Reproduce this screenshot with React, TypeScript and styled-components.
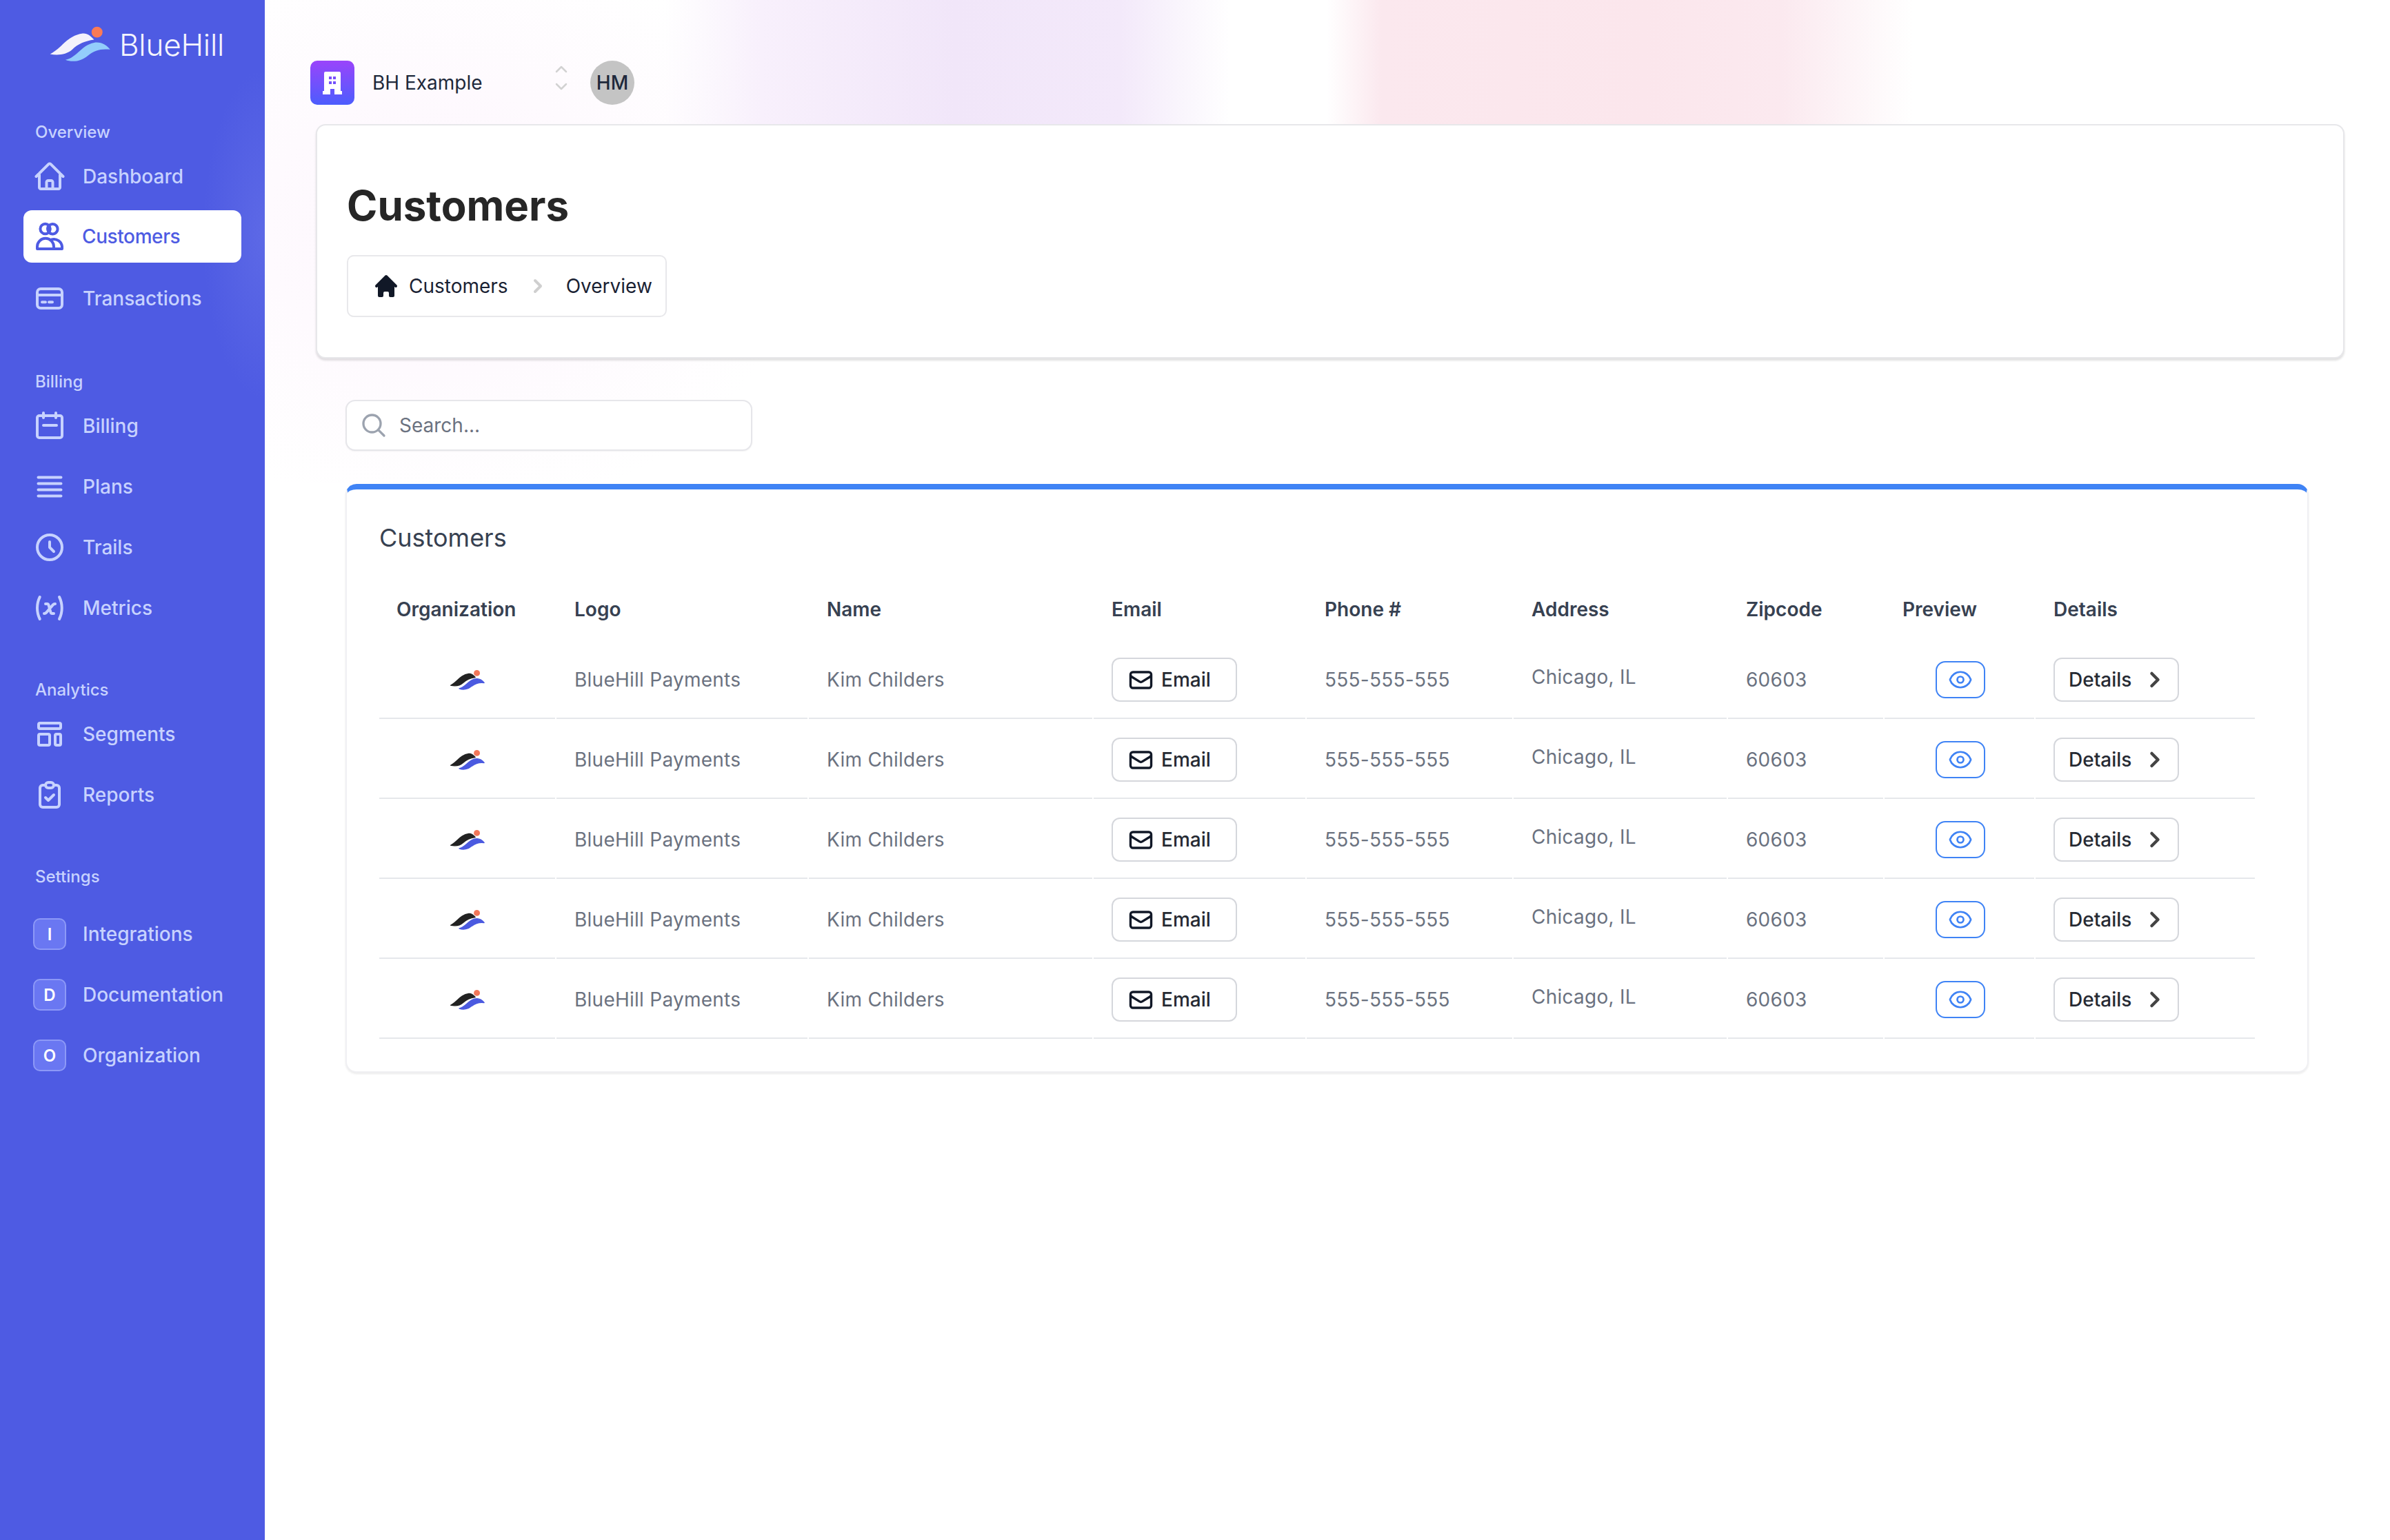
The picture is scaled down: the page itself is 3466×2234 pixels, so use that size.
import React from 'react';
import styled, { createGlobalStyle } from 'styled-components';
import { ChevronRight } from 'lucide-react';
import { HiHome, HiOutlineClipboardCheck, HiOutlineClock, HiOutlineTemplate, HiOutlineVariable } from 'react-icons/hi';
import {
  HiOutlineBars4,
  HiOutlineEnvelope,
  HiOutlineEye,
  HiOutlineHome,
  HiOutlineMagnifyingGlass,
} from 'react-icons/hi2';

const GlobalStyle = createGlobalStyle`
  * { box-sizing: border-box; }
  html, body { margin: 0; padding: 0; background: #fff; }
  body { font-family: Inter, "Liberation Sans", sans-serif; }
`;

const Shell = styled.div`
  display: flex;
  width: 3466px;
  min-height: 2234px;
`;

/* sidebar */
const Sidebar = styled.aside`
  flex: 0 0 384px;
  padding-top: 36px;
  background-color: #4e5be3;
  background-image: radial-gradient(ellipse 90px 240px at 100% 340px, #5d69e6, transparent);
`;

const Brand = styled.div`
  display: flex;
  align-items: center;
  gap: 10px;
  margin: 0 0 87px 70px;
`;

const BrandName = styled.span`
  padding-top: 2px;
  font-size: 44px;
  font-weight: 300;
  line-height: 55px;
  letter-spacing: -0.2px;
  color: #f4f4fd;
`;

const NavSection = styled.section<{ $first?: boolean }>`
  margin-bottom: ${(p) => (p.$first ? 71 : 69)}px;
`;

const SectionLabel = styled.div<{ $gap?: number }>`
  margin: 0 0 ${(p) => p.$gap ?? 14}px 51px;
  font-size: 24px;
  line-height: 24px;
  font-weight: 500;
  color: #c7d2fe;
`;

const NavList = styled.div`
  display: flex;
  flex-direction: column;
  gap: 12px;
`;

const NavItem = styled.a<{ $active?: boolean }>`
  display: flex;
  align-items: center;
  gap: ${(p) => (p.$active ? 23 : 24)}px;
  width: 316px;
  height: 76px;
  margin: ${(p) => (p.$active ? '-1px 0 2px 34px' : '0 0 0 34px')};
  padding-left: 14px;
  border-radius: 12px;
  font-size: 28px;
  font-weight: 500;
  letter-spacing: ${(p) => (p.$active ? '-0.4px' : '0')};
  color: ${(p) => (p.$active ? '#4e5be3' : '#c7d2fe')};
  background: ${(p) => (p.$active ? '#fff' : 'transparent')};

  svg {
    flex: none;
    width: 48px;
    height: 48px;
  }
`;

const LetterBadge = styled.span`
  display: flex;
  flex: none;
  align-items: center;
  justify-content: center;
  width: 48px;
  height: 46px;
  border: 2px solid #8d99f7;
  border-radius: 10px;
  background: #6a77f2;
  font-size: 24px;
  font-weight: 600;
  color: #fff;
`;

/* main column */
const Main = styled.main`
  flex: 1;
  padding-top: 88px;
  background-color: #fff;
  background-image:
    linear-gradient(
      90deg,
      transparent 580px,
      #f8f0fc 720px,
      #f1e6f9 1000px,
      #f3e9fa 1240px,
      transparent 1400px,
      transparent 1540px,
      #fbe8ee 1620px,
      #fbe6ec 2000px,
      #fbe9ef 2200px,
      transparent 2390px
    ),
    radial-gradient(ellipse 520px 420px at 260px 330px, #fdf5fd, transparent);
  background-repeat: no-repeat;
  background-size: 100% 300px, 100% 700px;
`;

const TopBar = styled.header`
  display: flex;
  align-items: center;
  height: 64px;
  margin-left: 66px;
`;

const OrgIcon = styled.div`
  display: flex;
  align-items: center;
  justify-content: center;
  width: 64px;
  height: 64px;
  border-radius: 10px;
  background: linear-gradient(180deg, #9a44fb 0%, #4c5dfd 100%);
`;

const OrgName = styled.span`
  width: 264px;
  margin-left: 26px;
  font-size: 28px;
  font-weight: 400;
  color: #1e293b;
`;

const Switcher = styled.svg`
  flex: none;
  align-self: flex-start;
  width: 20px;
  height: 36px;
  margin-top: 7px;
`;

const Avatar = styled.div`
  display: flex;
  align-items: center;
  justify-content: center;
  width: 64px;
  height: 64px;
  margin-left: 32px;
  border-radius: 50%;
  background: #c4c4c4;
  font-size: 28px;
  font-weight: 500;
  color: #1e293b;
`;

const PageHeader = styled.section`
  width: 2942px;
  margin: 28px 0 0 74px;
  padding: 80px 43px 58px;
  border: 2px solid #e7e7ea;
  border-radius: 14px;
  background: #fff;
  box-shadow: 0 3px 3px rgba(0, 0, 0, 0.12);
`;

const Title = styled.h1`
  margin: 0 0 36px;
  font-size: 60px;
  line-height: 72px;
  font-weight: 700;
  color: #262626;
`;

const Breadcrumb = styled.nav`
  display: flex;
  align-items: center;
  width: 464px;
  height: 90px;
  padding-left: 35px;
  border: 2px solid #e8e8eb;
  border-radius: 10px;
  font-size: 28px;
  color: #1a2233;
`;

const CrumbHome = styled(HiHome)`
  flex: none;
  width: 40px;
  height: 40px;
  margin-right: 13px;
  color: #111827;
`;

const CrumbArrow = styled.svg`
  flex: none;
  width: 14px;
  height: 24px;
  margin: 0 34px 0 36px;
`;

const Content = styled.div`
  width: 2847px;
  margin: 60px 0 0 117px;
`;

const SearchBox = styled.div`
  display: flex;
  align-items: center;
  gap: 17px;
  width: 590px;
  height: 74px;
  padding-left: 19px;
  border: 2px solid #e6e6ea;
  border-radius: 14px;
  background: #fff;
  font-size: 28px;
  color: #6b7280;
  box-shadow: 0 1px 2px rgba(0, 0, 0, 0.05);

  svg {
    width: 40px;
    height: 40px;
    color: #9ca3af;
  }
`;

const TableCard = styled.section`
  margin-top: 48px;
  padding: 48px 76px 47px 47px;
  border: 2px solid #f0f0f3;
  border-top: 8px solid #3f83f5;
  border-radius: 16px;
  background: #fff;
  box-shadow: 0 2px 3px rgba(0, 0, 0, 0.08);
`;

const CardTitle = styled.h2`
  margin: 0 0 39px;
  font-size: 36px;
  line-height: 44px;
  font-weight: 400;
  color: #374151;
`;

const Table = styled.table`
  width: calc(100% + 4px);
  margin: 0 -2px;
  border-collapse: separate;
  border-spacing: 2px 0;
  table-layout: fixed;
`;

const Col = styled.col<{ $w: number }>`
  width: ${(p) => p.$w}px;
`;

const Th = styled.th`
  height: 86px;
  padding: 0 0 0 26px;
  font-size: 28px;
  font-weight: 600;
  text-align: left;
  color: #374151;

  &:first-child {
    padding-left: 25px;
  }
`;

const Td = styled.td<{ $raised?: boolean }>`
  height: 116px;
  padding: ${(p) => (p.$raised ? '0 0 4px 26px' : '4px 0 0 26px')};
  border-bottom: 2px solid #e5e7eb;
  font-size: 28px;
  font-weight: 400;
  letter-spacing: 0.25px;
  color: #6b7280;
  white-space: nowrap;
`;

const LogoCell = styled.td`
  height: 116px;
  padding: 4px 0 0;
  border-bottom: 2px solid #e5e7eb;
  text-align: center;
`;

const OutlineButton = styled.button`
  display: inline-flex;
  align-items: center;
  width: 182px;
  height: 64px;
  padding: 0;
  border: 2px solid #d5d7dc;
  border-radius: 12px;
  background: #fff;
  font: 450 28px Inter, "Liberation Sans", sans-serif;
  color: #262a33;
  vertical-align: middle;
`;

const EmailButton = styled(OutlineButton)`
  gap: 11px;
  padding-left: 22px;

  svg {
    width: 37px;
    height: 37px;
    color: #111827;
  }
`;

const DetailsButton = styled(OutlineButton)`
  gap: 16px;
  padding-left: 20px;

  svg {
    color: #444;
  }
`;

const PreviewButton = styled.button`
  display: inline-flex;
  align-items: center;
  justify-content: center;
  width: 72px;
  height: 54px;
  margin-left: 48px;
  padding: 0;
  border: 2px solid #3f83f5;
  border-radius: 14px;
  background: #fff;
  color: #3f83f5;
  vertical-align: middle;

  svg {
    width: 36px;
    height: 36px;
  }
`;

/* drawings */
const HillLogo = ({
  width,
  hill,
  wave,
  sun,
  thicken = 0,
}: {
  width: number;
  hill: string;
  wave: string;
  sun: string;
  thicken?: number;
}) => (
  <svg width={width} viewBox="90 50 280 165" style={{ verticalAlign: 'middle' }}>
    <path
      d="M98 175C150 150 170 95 240 85C260 83 275 95 290 112C250 118 220 130 195 155C170 178 130 182 98 175Z"
      fill={hill}
      stroke={hill}
      strokeWidth={thicken}
      strokeLinejoin="round"
    />
    <path
      d="M165 200C215 190 235 135 290 125C320 120 345 135 360 155C320 150 290 160 265 180C235 207 195 212 165 200Z"
      fill={wave}
      stroke={wave}
      strokeWidth={thicken}
      strokeLinejoin="round"
    />
    <circle cx="303" cy="79" r="24" fill={sun} />
  </svg>
);

const strokeProps = {
  viewBox: '0 0 24 24',
  fill: 'none',
  stroke: 'currentColor',
  strokeWidth: 2,
  strokeLinecap: 'round' as const,
  strokeLinejoin: 'round' as const,
};

const UsersIcon = () => (
  <svg {...strokeProps}>
    <circle cx="8.8" cy="6.5" r="3.6" />
    <path d="M12.2 3.6a3.6 3.6 0 1 1 2.2 6.6a3.6 3.6 0 0 1-2.2-6.6" />
    <path d="M3 21v-1.6a6 6 0 0 1 12 0V21Z" />
    <path d="M13.5 14.2a6 6 0 0 1 7.5 5.2V21h-6" />
  </svg>
);

const CardIcon = () => (
  <svg {...strokeProps}>
    <rect x="3" y="5" width="18" height="14" rx="2.5" />
    <path d="M3 9.5h18M6.5 14.6h2.5M11.5 14.6h2.5" />
  </svg>
);

const CalendarIcon = () => (
  <svg {...strokeProps}>
    <rect x="3" y="4.5" width="18" height="16" rx="1.5" />
    <path d="M7.5 2.5v3.5M16.5 2.5v3.5M7.5 11.5h9.5" />
  </svg>
);

const BuildingIcon = () => (
  <svg width="28" height="33" viewBox="0 0 28 33">
    <path
      fillRule="evenodd"
      fill="#fff"
      d="M4 0h20a2 2 0 0 1 2 2v26h2v5H17v-8h-6v8H0v-5h2V2a2 2 0 0 1 2-2ZM9 7v4h4V7ZM15 7v4h4V7ZM9 14v4h4v-4ZM15 14v4h4v-4Z"
    />
  </svg>
);

const customers = Array.from({ length: 5 }, (_, i) => i);
const columnWidths = [255, 364, 411, 307, 298, 309, 225, 217, 318];
const headers = ['Organization', 'Logo', 'Name', 'Email', 'Phone #', 'Address', 'Zipcode', 'Preview', 'Details'];

export default function App() {
  return (
    <>
      <GlobalStyle />
      <Shell>
        <Sidebar>
          <Brand>
            <HillLogo width={93} hill="#f4f2fb" wave="#93cdfb" sun="#fb7a55" />
            <BrandName>BlueHill</BrandName>
          </Brand>

          <NavSection $first>
            <SectionLabel>Overview</SectionLabel>
            <NavList>
              <NavItem>
                <HiOutlineHome strokeWidth={2} />
                Dashboard
              </NavItem>
              <NavItem $active>
                <UsersIcon />
                Customers
              </NavItem>
              <NavItem>
                <CardIcon />
                Transactions
              </NavItem>
            </NavList>
          </NavSection>

          <NavSection>
            <SectionLabel>Billing</SectionLabel>
            <NavList>
              <NavItem>
                <CalendarIcon />
                Billing
              </NavItem>
              <NavItem>
                <HiOutlineBars4 strokeWidth={2} />
                Plans
              </NavItem>
              <NavItem>
                <HiOutlineClock />
                Trails
              </NavItem>
              <NavItem>
                <HiOutlineVariable />
                Metrics
              </NavItem>
            </NavList>
          </NavSection>

          <NavSection>
            <SectionLabel>Analytics</SectionLabel>
            <NavList>
              <NavItem>
                <HiOutlineTemplate />
                Segments
              </NavItem>
              <NavItem>
                <HiOutlineClipboardCheck />
                Reports
              </NavItem>
            </NavList>
          </NavSection>

          <NavSection>
            <SectionLabel $gap={33}>Settings</SectionLabel>
            <NavList>
              <NavItem>
                <LetterBadge>I</LetterBadge>
                Integrations
              </NavItem>
              <NavItem>
                <LetterBadge>D</LetterBadge>
                Documentation
              </NavItem>
              <NavItem>
                <LetterBadge>O</LetterBadge>
                Organization
              </NavItem>
            </NavList>
          </NavSection>
        </Sidebar>

        <Main>
          <TopBar>
            <OrgIcon>
              <BuildingIcon />
            </OrgIcon>
            <OrgName>BH Example</OrgName>
            <Switcher viewBox="0 0 20 36" fill="none" stroke="#d2d2d2" strokeWidth="2.5" strokeLinecap="round" strokeLinejoin="round">
              <path d="M3 9l7-7 7 7M3 27l7 7 7-7" />
            </Switcher>
            <Avatar>HM</Avatar>
          </TopBar>

          <PageHeader>
            <Title>Customers</Title>
            <Breadcrumb>
              <CrumbHome />
              Customers
              <CrumbArrow viewBox="0 0 14 24" fill="none" stroke="#cfcfcf" strokeWidth="4" strokeLinecap="round" strokeLinejoin="round">
                <path d="M3 4l8 8-8 8" />
              </CrumbArrow>
              Overview
            </Breadcrumb>
          </PageHeader>

          <Content>
            <SearchBox>
              <HiOutlineMagnifyingGlass strokeWidth={2} />
              Search...
            </SearchBox>

            <TableCard>
              <CardTitle>Customers</CardTitle>
              <Table>
                <colgroup>
                  {columnWidths.map((w, i) => (
                    <Col key={i} $w={w} />
                  ))}
                </colgroup>
                <thead>
                  <tr>
                    {headers.map((h) => (
                      <Th key={h}>{h}</Th>
                    ))}
                  </tr>
                </thead>
                <tbody>
                  {customers.map((i) => (
                    <tr key={i}>
                      <LogoCell>
                        <HillLogo width={52} hill="#222222" wave="#4b5ae0" sun="#f2775a" thicken={7} />
                      </LogoCell>
                      <Td>BlueHill Payments</Td>
                      <Td>Kim Childers</Td>
                      <Td>
                        <EmailButton>
                          <HiOutlineEnvelope strokeWidth={2.2} />
                          Email
                        </EmailButton>
                      </Td>
                      <Td>555-555-555</Td>
                      <Td $raised>Chicago, IL</Td>
                      <Td>60603</Td>
                      <Td>
                        <PreviewButton>
                          <HiOutlineEye strokeWidth={1.8} />
                        </PreviewButton>
                      </Td>
                      <Td>
                        <DetailsButton>
                          Details
                          <ChevronRight size={36} strokeWidth={3} />
                        </DetailsButton>
                      </Td>
                    </tr>
                  ))}
                </tbody>
              </Table>
            </TableCard>
          </Content>
        </Main>
      </Shell>
    </>
  );
}
